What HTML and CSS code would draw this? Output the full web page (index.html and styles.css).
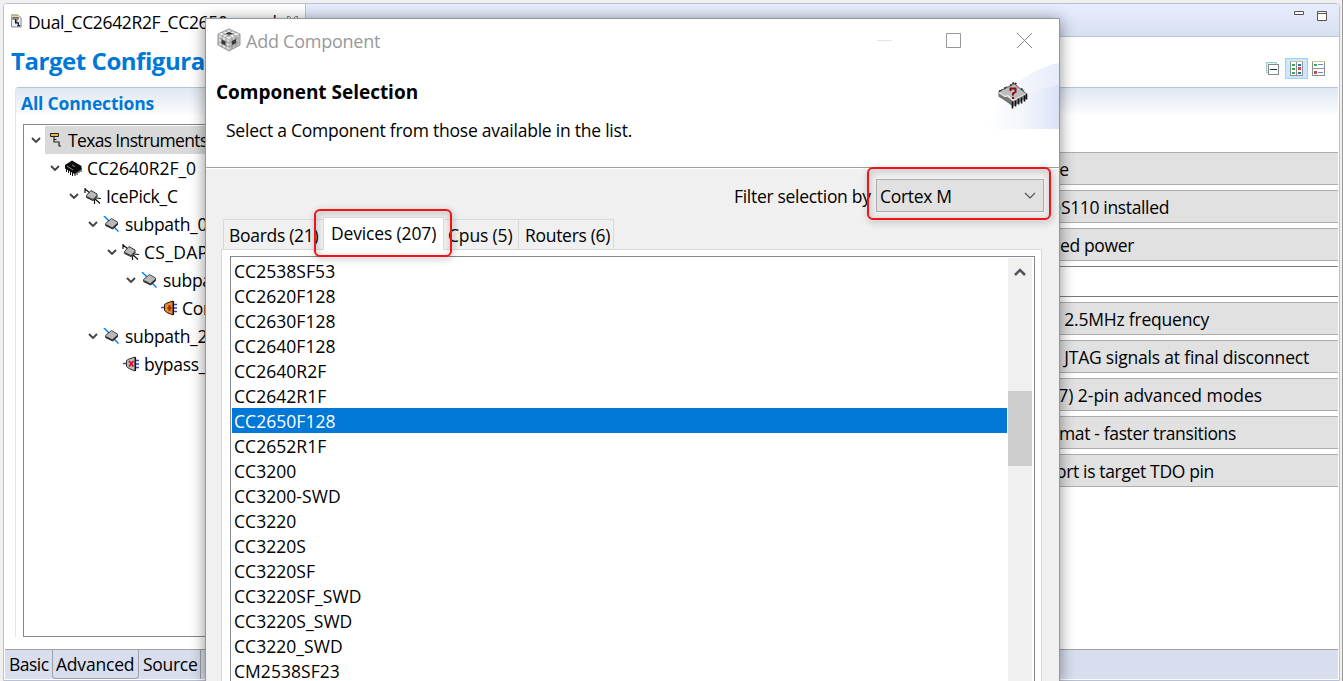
FILE: index.html
```html
<!DOCTYPE html>
<html lang="en">
<head>
<meta charset="utf-8">
<title>Add Component</title>
<link rel="stylesheet" href="styles.css">
</head>
<body>
<svg class="defs" aria-hidden="true">
  <defs>
    <linearGradient id="swoosh" x1="0" x2="1"><stop offset="0" stop-color="#fff"/><stop offset="1" stop-color="#dbe2f7"/></linearGradient>
    <linearGradient id="swoosh2" x1="0" x2="1"><stop offset="0" stop-color="#fff" stop-opacity="0"/><stop offset="1" stop-color="#d4ddf6"/></linearGradient>
    <symbol id="down" viewBox="0 0 10 7"><path d="M1 1l4 4 4-4" fill="none" stroke="#404040" stroke-width="1.8"/></symbol>
    <symbol id="router" viewBox="0 0 17 16"><path d="M1 0v5M1 1l5 4M12 10l5 .500M10 10l6 5.500M10.500 11v5" fill="none" stroke="#111" stroke-width="1.200"/><path d="M2.500 7.500L7 2.500l6 3.500v2.500l-4 4-6.500-3z" fill="#b9b9b9" stroke="#333"/><path d="M3 9l6 3 4-4" fill="none" stroke="#444" stroke-width="1.600"/></symbol>
    <symbol id="subpath" viewBox="0 0 17 16"><path d="M1 0l6 6M10 10l5.500 5.500" stroke="#08f" stroke-width="1.500"/><path d="M2.500 7.500L8.500 2.500l6 3.500v2.500l-5 4-7-3z" fill="#b9b9b9" stroke="#444"/><path d="M3 9l6.500 3.500 5-4.500" fill="none" stroke="#333" stroke-width="1.700"/></symbol>
    <symbol id="cpu" viewBox="0 0 17 16"><path d="M1 7.500h4M13 4.500h4M13 8h4M13 11.500h4" stroke="#3548c8" stroke-width="1.300"/><path d="M4.500 4.500L7 3l6-2v14l-6-2.500-2.500-2z" fill="#f08a24" stroke="#301808"/><path d="M13.500 1v14" stroke="#111" stroke-width="1.200"/><path d="M9.500 5v6M7.500 8h4" stroke="#8d3000" stroke-width="2"/></symbol>
    <symbol id="bypass" viewBox="0 0 17 16"><path d="M1 7.500h4M13 4.500h4M13 8h4M13 11.500h4" stroke="#3548c8" stroke-width="1.300"/><path d="M4.500 4.500L7 3l6-2v14l-6-2.500-2.500-2z" fill="#bcbcbc" stroke="#333"/><path d="M13.500 1v14" stroke="#111" stroke-width="1.200"/><path d="M7 5l4.500 5.500M11.500 5L7 10.500" stroke="#d8101c" stroke-width="1.800"/></symbol>
  </defs>
</svg>
<div class="editor">
  <div class="editor-tabs">
    <div class="file-tab">
      <svg class="file-icon" viewBox="0 0 12 14"><path d="M.5.5h7l3.500 3v10H.5z" fill="#e9eef5" stroke="#6d7f99"/><path d="M.5 4V.5h7L11 3.500" fill="none" stroke="#c9aa5c"/><path d="M2 3h6v2H2z" fill="#d9b44e" stroke="#222" stroke-width=".7"/><path d="M5 5v4h3v3.500M5 7h2M7 12h3" fill="none" stroke="#111" stroke-width="1.300"/></svg>
      <span class="file-name">Dual_CC2642R2F_CC2650.ccxml</span>
      <svg class="tab-close" viewBox="0 0 11 10"><path d="M.5.5h2l3 3 3-3h2v2l-3 3 3 3v1h-2l-3-3-3 3h-2v-1l3-3-3-3z" fill="#fff" stroke="#777"/></svg>
    </div>
    <div class="view-buttons">
      <svg width="10" height="4"><path d="M.5.500h9v3h-9z" fill="#fff" stroke="#555"/></svg>
      <svg width="10" height="10"><path d="M.5.500h9v9h-9zM.5 2.500h9" fill="#fff" stroke="#555"/></svg>
    </div>
  </div>
  <div class="form-head">
    <h1>Target Configuration</h1>
    <div class="tools">
      <svg width="13" height="13" shape-rendering="crispEdges"><path d="M.5.500h10v10H.5z" fill="#e4f4f4" stroke="#9bcbc9"/><path d="M2.500 2.500h10v10h-10z" fill="#fff" stroke="#888"/><path d="M4 7.500h7" stroke="#173468"/></svg>
      <span class="tool-on"><svg width="13" height="15" shape-rendering="crispEdges"><path d="M.5.500h12v14H.5zM6.500 0v14" fill="#fff" stroke="#8f8f8f"/><path d="M0 .5h13" stroke="#c8c88e"/><path d="M2 3h3v2H2zM2 7h3v2H2zM2 11h3v2H2z" fill="#35aa52"/><path d="M8 3h3v2H8zM8 11h3v2H8z" fill="#3368b5"/><path d="M8 6h3v3H8z" fill="#c84b50"/></svg></span>
      <svg width="13" height="15" shape-rendering="crispEdges"><path d="M.5.500h12v14H.5zM0 7.500h13" fill="#fff" stroke="#8f8f8f"/><path d="M0 .5h13" stroke="#c8c88e"/><path d="M2 3h3v2H2z" fill="#35aa52"/><path d="M2 10h3v3H2z" fill="#c84b50"/><path d="M6 3.500h5M6 11.500h5" stroke="#6a83cc"/></svg>
    </div>
  </div>
  <div class="form-body">
    <section class="connections">
      <h2>All Connections</h2>
      <div class="tree">
        <div class="node l0"><svg class="twist"><use href="#down"/></svg><div class="node-label selected"><svg class="icon" viewBox="0 0 17 16"><path d="M4.500 1.500h8v3h-8z" fill="#e6bd3c" stroke="#222"/><path d="M8 5v5h5v4h2M8 7.500h2.500" fill="none" stroke="#222" stroke-width="1.200"/></svg><span class="probe">Texas Instruments</span></div></div>
        <div class="node l1"><svg class="twist"><use href="#down"/></svg><div class="node-label"><svg class="icon" viewBox="0 0 17 16"><path d="M0 5l7-4.500L16.500 6v3.500L9.500 14 0 8.500z" fill="#0b0b0b"/><path d="M1.500 8v4M3.500 9v4M5.500 11v4M7.500 12v4M10 12v4M12 11v4M14 9v4M16 8v4" stroke="#111"/><path d="M7 5l3 1.500M2 6l6 4" stroke="#aaa" stroke-width=".8"/></svg><span class="wide">CC2640R2F_0</span></div></div>
        <div class="node l2"><svg class="twist"><use href="#down"/></svg><div class="node-label"><svg class="icon"><use href="#router"/></svg>IcePick_C</div></div>
        <div class="node l3"><svg class="twist"><use href="#down"/></svg><div class="node-label"><svg class="icon"><use href="#subpath"/></svg>subpath_0</div></div>
        <div class="node l4"><svg class="twist"><use href="#down"/></svg><div class="node-label"><svg class="icon"><use href="#router"/></svg><span class="dap">CS_DAP_0</span></div></div>
        <div class="node l5"><svg class="twist"><use href="#down"/></svg><div class="node-label"><svg class="icon"><use href="#subpath"/></svg>subpath_1</div></div>
        <div class="node l6"><span class="twist"></span><div class="node-label"><svg class="icon"><use href="#cpu"/></svg>Cortex</div></div>
        <div class="node l3"><svg class="twist"><use href="#down"/></svg><div class="node-label"><svg class="icon"><use href="#subpath"/></svg>subpath_2</div></div>
        <div class="node l4"><span class="twist"></span><div class="node-label"><svg class="icon"><use href="#bypass"/></svg>bypass_0</div></div>
      </div>
    </section>
    <section class="properties">
      <div class="section-bar"></div>
      <div class="fields">
        <div class="field f1"><span>te</span></div>
        <div class="field f2"><span>DS110 installed</span></div>
        <div class="field f3"><span>ed power</span></div>
        <div class="field entry"></div>
        <div class="field f4"><span>t 2.5MHz frequency</span></div>
        <div class="field f5"><span>JTAG signals at final disconnect</span></div>
        <div class="field f6"><span>7) 2-pin advanced modes</span></div>
        <div class="field f7"><span>mat - faster transitions</span></div>
        <div class="field f8"><span>ort is target TDO pin</span></div>
      </div>
    </section>
  </div>
  <div class="page-tabs"><span class="page basic">Basic</span><span class="page current">Advanced</span><span class="page source">Source</span></div>
</div>

<div class="dialog">
  <div class="titlebar">
    <svg class="app-icon" viewBox="0 0 24 24"><path d="M1 6l11-5 11 5v11l-11 6-11-6z" fill="#bcbcbc" stroke="#999"/><path d="M2 6l10-4 10 4-10 5z" fill="#ececec"/><path d="M2 7l10 5v10L2 17z" fill="#dcdcdc"/><path d="M22 7l-10 5v10l10-5z" fill="#bcbcbc"/><path d="M5 4.500l10 5M8.500 3l10 5M15 3L5 8M18.500 4.500L8 9.500M5 8v11M9 10v11M15 10v11M19 8v11M2 10l10 5 10-5M2 14l10 5 10-5" stroke="#8a8a8a" stroke-width=".8" fill="none"/><path d="M8.500 5.500L12 4l4 1.500L12 7zM4.500 11.500l4 2v4l-4-2zM15 13l4-2v4l-4 2z" fill="#383838"/></svg>
    <span class="title">Add Component</span>
    <div class="window-buttons">
      <svg width="15" height="15"><path d="M0 7.500h15" stroke="#e4e4e4"/></svg>
      <svg width="15" height="15"><path d="M.5.500h14v14H.5z" fill="none" stroke="#999"/></svg>
      <svg width="15" height="15"><path d="M0 0l15 15M15 0L0 15" stroke="#888"/></svg>
    </div>
  </div>
  <div class="banner">
    <div class="banner-text"><h3>Component Selection</h3><p>Select a Component from those available in the list.</p></div>
    <svg class="banner-art" viewBox="0 0 74 67">
      <path d="M74 1C43 7 12 31 2 67h72z" fill="url(#swoosh)" opacity=".65"/>
      <path d="M74 23C49 26 29 40 20 67h54z" fill="url(#swoosh2)" opacity=".7"/>
      <g transform="translate(0 -.5)">
      <path d="M14 30l12-6 3-2 12 10-13 10-14-7z" fill="#bcbcbc" stroke="#555"/>
      <path d="M14 31l14 8v6l-14-10z" fill="#777"/><path d="M28 39l13-8v6l-13 8z" fill="#888"/>
      <path d="M14 31l6 4 3-1 5 5 13-7" fill="none" stroke="#eee" stroke-width="1.200"/>
      <path d="M27.500 40v7M30.500 39v6M33.500 37v6M36.500 36v6M39.500 34v6M41.500 32v6" stroke="#111" stroke-width="1.600"/>
      <path d="M14 30l3-2M19 27l3-2M25 24l4-3 3 2M36 27l3 2" stroke="#222" stroke-width="1.500" stroke-dasharray="2 1" fill="none"/>
      <path d="M25.500 29.500V27h5v3.500L28 32v2M27 36.500h2" fill="none" stroke="#87101a" stroke-width="2"/>
      </g>
    </svg>
  </div>
  <div class="content">
    <div class="filter"><span class="filter-label">Filter selection by</span><div class="combo"><span>Cortex M</span><svg width="12" height="8"><path d="M1 1l5 5 5-5" fill="none" stroke="#555" stroke-width="1.200"/></svg></div></div>
    <div class="tabs"><div class="tab boards"><span>Boards (21)</span></div><div class="tab devices"><span>Devices (207)</span></div><div class="tab cpus"><span>Cpus (5)</span></div><div class="tab routers"><span>Routers (6)</span></div></div>
    <div class="tab-panel">
      <div class="list-box">
        <ul>
          <li>CC2538SF53</li><li>CC2620F128</li><li>CC2630F128</li><li>CC2640F128</li><li>CC2640R2F</li><li>CC2642R1F</li><li class="picked">CC2650F128</li><li>CC2652R1F</li><li>CC3200</li><li>CC3200-SWD</li><li>CC3220</li><li>CC3220S</li><li>CC3220SF</li><li>CC3220SF_SWD</li><li>CC3220S_SWD</li><li>CC3220_SWD</li><li>CM2538SF23</li>
        </ul>
        <div class="scrollbar"><svg width="12" height="9"><path d="M1 8l5-5 5 5" fill="none" stroke="#555" stroke-width="2.600"/></svg><div class="thumb"></div></div>
      </div>
    </div>
  </div>
  <div class="mark mark-tab"></div>
  <div class="mark mark-filter"></div>
</div>
</body>
</html>
```
FILE: styles.css
```css
* { box-sizing: border-box; }
body { margin: 0; width: 1343px; height: 681px; overflow: hidden; position: relative; background: #f0f0f0; font: 17.5px/25px "Open Sans", "Noto Sans", sans-serif; letter-spacing: -0.3px; color: #000; white-space: nowrap; border-right: 1px solid #999; }
h1, h2, h3, p, ul { margin: 0; padding: 0; font-size: inherit; }
svg { display: block; flex: none; }
.defs { position: absolute; width: 0; height: 0; }

.editor { margin: 3px 2px 0 3px; height: 678px; border: 1px solid #bcc0d6; border-radius: 4px 4px 0 0; background: #fff; display: flex; flex-direction: column; overflow: hidden; }
.editor-tabs { height: 33px; flex: none; display: flex; justify-content: space-between; background: linear-gradient(#e8edfe, #d8dfef); border-bottom: 1px solid #b7c3da; }
.file-tab { width: 302px; height: 33px; background: #fff; border-right: 1px solid #bcc0d6; display: flex; align-items: center; padding: 4px 0 0 7px; }
.file-icon { width: 11px; height: 14px; margin: -3px 6px 0 0; }
.file-name { width: 257px; letter-spacing: -0.35px; }
.tab-close { width: 11px; height: 10px; margin: -3px 0 0 2px; }
.view-buttons { display: flex; gap: 13px; padding: 7px 12px 0 0; }
.form-head { height: 50px; flex: none; display: flex; justify-content: space-between; padding: 7px 14px 0 7px; }
h1 { font-size: 24px; line-height: 34px; color: #0078d7; letter-spacing: -0.45px; }
.tools { display: flex; align-items: center; height: 21px; margin-top: 14px; gap: 4px; }
.tool-on { width: 23px; height: 21px; display: grid; place-items: center; background: #cce8ff; border: 1px solid #99d1ff; margin: 0 0 0 2px; }
.form-body { flex: 1; min-height: 0; display: flex; padding: 0 1px 0 11px; }
.connections { width: 500px; display: flex; flex-direction: column; height: 550px; border-top: 1px solid #b7c3da; border-left: 1px solid #dfe5ef; border-radius: 4px 0 0 0; }
h2 { height: 26px; margin-bottom: 10px; padding: 2px 0 0 5px; background: linear-gradient(#dfe7f1, #fafcfe); color: #0078d7; font-size: 17.5px; line-height: 26px; letter-spacing: -0.17px; }
.tree { margin-left: 7px; flex: 1; border: 1px solid #828790; padding-top: 1px; }
.node { display: flex; height: 28px; align-items: center; }
.l0 { padding-left: 7px; } .l1 { padding-left: 26px; } .l2 { padding-left: 45px; } .l3 { padding-left: 64px; } .l4 { padding-left: 83px; } .l5 { padding-left: 102px; } .l6 { padding-left: 121px; }
.twist { width: 10px; height: 7px; margin-right: 4px; flex: none; }
.node-label { flex: 1; display: flex; align-items: center; height: 28px; padding: 1px 0 0 1px; }
.selected { background: #d9d9d9; }
.probe { letter-spacing: -0.65px; }
.wide { letter-spacing: -0.05px; }
.dap { letter-spacing: 0.3px; }
.icon { width: 17px; height: 16px; margin: -2px 5px 0 0; }
.properties { flex: 1; border-top: 1px solid #b7c3da; }
.section-bar { height: 25px; background: linear-gradient(#dfe7f1, #fafcfe); }
.fields { padding-top: 39px; display: flex; flex-direction: column; gap: 5px; letter-spacing: -0.2px; }
.field { height: 33px; background: #e1e1e1; border: 1px solid #adadad; border-right: 0; display: flex; justify-content: flex-end; align-items: center; padding-top: 1px; }
.entry { height: 31px; background: #fff; border-color: #7a7a7a; }
.f1 { padding-right: 269px; } .f2 { padding-right: 169px; letter-spacing: -0.35px; } .f3 { padding-right: 204px; letter-spacing: -0.35px; } .f4 { padding-right: 129px; } .f5 { padding-right: 29px; } .f6 { padding-right: 76px; letter-spacing: -0.03px; } .f7 { padding-right: 102px; letter-spacing: -0.35px; } .f8 { padding-right: 124px; letter-spacing: -0.35px; }
.page-tabs { height: 31px; flex: none; margin: 0 1px; display: flex; background: #d8deed; border-top: 1px solid #a0a0a0; border-bottom: 1px solid #fff; }
.page { padding-top: 2px; height: 29px; }
.basic { width: 47px; padding-left: 4px; letter-spacing: -0.5px; }
.current { width: 87px; border: 1px solid #a0a0a0; border-top: 0; border-radius: 0 0 4px 4px; padding-left: 3px; letter-spacing: -0.2px; }
.source { width: 62px; padding-left: 4px; border-right: 1px solid #a0a0a0; }

.dialog { position: absolute; left: 205px; top: 18px; width: 855px; height: 663px; border: 1px solid #9097a3; border-bottom: 0; background: #f0f0f0; box-shadow: 0 2px 14px rgba(0,0,0,.45); }
.titlebar { height: 43px; background: #fff; display: flex; align-items: center; padding: 0 27px 0 11px; }
.app-icon { width: 24px; height: 24px; margin: -2px 5px 0 0; }
.title { color: #999; padding-top: 1px; font-size: 18px; letter-spacing: -0.25px; }
.window-buttons { margin-left: auto; display: flex; gap: 56px; }
.window-buttons svg:first-child { margin-right: -2px; }
.banner { height: 106px; background: #fff; border-bottom: 1px solid #a0a0a0; display: flex; justify-content: space-between; }
.banner-text { padding: 18px 0 0 10px; }
h3 { font-size: 19px; line-height: 25px; letter-spacing: -0.02px; }
.banner-text p { margin: 13px 0 0 10px; letter-spacing: -0.23px; }
.banner-art { width: 74px; height: 67px; }
.content { border-top: 1px solid #fff; padding: 10px 17px 0 15px; height: 513px; overflow: hidden; }
.filter { display: flex; justify-content: flex-end; height: 33px; }
.filter-label { width: 142px; padding-top: 5px; }
.combo { width: 168px; margin-right: -2px; border: 1px solid #adadad; background: #e1e1e1; display: flex; align-items: center; justify-content: space-between; padding: 2px 7px 0 3px; }
.combo svg { margin-top: -2px; }
.tabs { display: flex; align-items: flex-end; height: 37px; padding-left: 2px; }
.tab { height: 30px; border: 1px solid #d9d9d9; border-bottom: 0; padding: 3px 0 0 5px; }
.boards { width: 100px; border-right: 0; }
.devices { width: 121px; height: 33px; margin-bottom: -1px; background: #fff; padding: 3px 0 0 7px; z-index: 1; letter-spacing: -0.15px; }
.cpus { width: 75px; border-left: 0; padding-left: 4px; letter-spacing: -0.15px; }
.routers { width: 95px; border-left: 0; padding-left: 6px; }
.tab-panel { border: 1px solid #d9d9d9; background: #fff; height: 450px; padding: 6px 6px 0 8px; }
.list-box { height: 440px; border: 1px solid #828790; padding: 1px; display: flex; }
ul { list-style: none; flex: 1; letter-spacing: 0.05px; }
li { height: 25px; line-height: 27px; padding-left: 2px; }
.picked { background: #0078d7; color: #fff; }
.scrollbar { width: 26px; background: #f0f0f0; border-left: 1px solid #fff; border-right: 1px solid #fff; display: flex; flex-direction: column; align-items: center; padding-top: 9px; }
.thumb { width: 24px; height: 75px; margin-top: 115px; background: #cdcdcd; flex: none; }
.mark { position: absolute; border: 2px solid #f01414; border-radius: 6px; filter: drop-shadow(1px 2px 3px rgba(0,0,0,.4)); }
.mark-tab { left: 108px; top: 190px; width: 138px; height: 48px; }
.mark-filter { left: 661px; top: 148px; width: 184px; height: 53px; }
```
